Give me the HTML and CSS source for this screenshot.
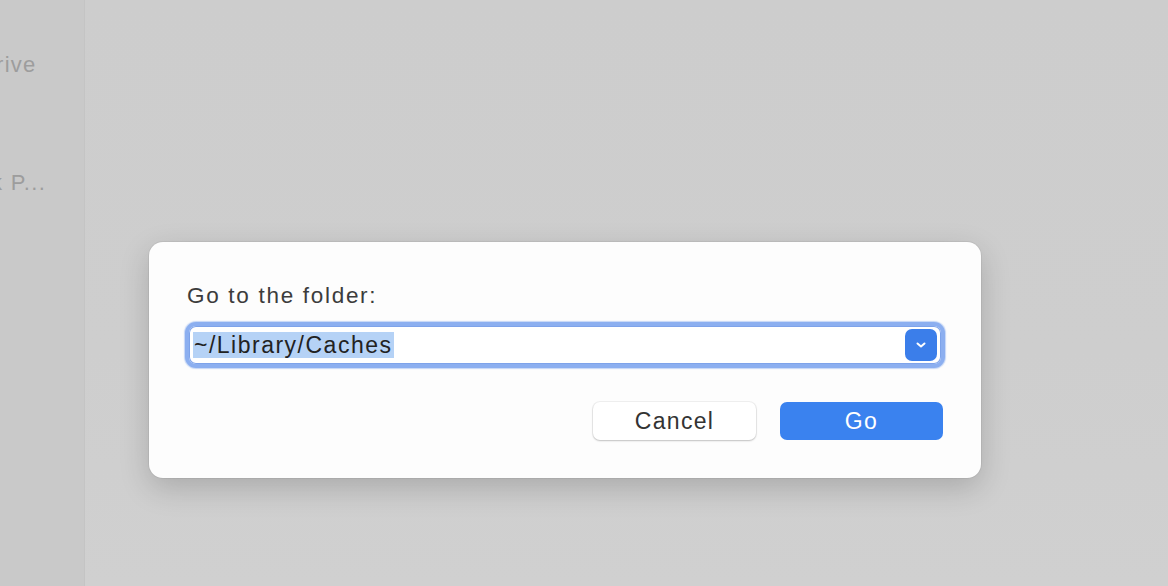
FILE: index.html
```html
<!DOCTYPE html>
<html>
<head>
<meta charset="utf-8">
<link rel="stylesheet" href="styles.css">
</head>
<body>
<div class="app">
  <aside class="sidebar">
    <div class="side-item first">rive</div>
    <div class="side-item second">k P...</div>
  </aside>
  <main class="main">
    <div class="dialog">
      <div class="label">Go to the folder:</div>
      <div class="field">
        <span class="value"><span class="sel">~/Library/Caches</span></span>
        <span class="drop">
          <svg width="14" height="10" viewBox="0 0 14 10"><path d="M3.5 3.5 L7 6.5 L10.5 3.5" fill="none" stroke="#fff" stroke-width="2" stroke-linecap="round" stroke-linejoin="round"/></svg>
        </span>
      </div>
      <div class="buttons">
        <button class="btn cancel">Cancel</button>
        <button class="btn go">Go</button>
      </div>
    </div>
  </main>
</div>
</body>
</html>
```
FILE: styles.css
```css
html, body {
  margin: 0;
  padding: 0;
  width: 1168px;
  height: 586px;
  overflow: hidden;
  font-family: "Helvetica Neue", "Liberation Sans", Arial, sans-serif;
}
.app {
  display: flex;
  width: 1168px;
  height: 586px;
}
.sidebar {
  width: 84px;
  background: #c9c9c9;
  border-right: 1px solid #c4c4c4;
  overflow: hidden;
  flex-shrink: 0;
}
.side-item {
  color: #9d9d9d;
  font-size: 22px;
  letter-spacing: 1.3px;
  white-space: nowrap;
  line-height: 28px;
}
.side-item.first {
  margin-top: 51px;
  margin-left: -4px;
}
.side-item.second {
  margin-top: 90px;
  margin-left: -9px;
}
.main {
  flex: 1;
  background: linear-gradient(180deg, #cdcdcd 0%, #cecece 60%, #d0d0d0 100%);
  padding-top: 242px;
  padding-left: 64px;
}
.dialog {
  width: 832px;
  height: 236px;
  box-sizing: border-box;
  background: #fdfdfd;
  border-radius: 14px;
  box-shadow: 0 10px 30px rgba(0,0,0,0.18), 0 0 0 1px rgba(0,0,0,0.05);
  padding: 40px 36px 0 36px;
}
.label {
  font-size: 22.5px;
  letter-spacing: 1.7px;
  color: #3c3c3c;
  line-height: 28px;
  margin-left: 2px;
}
.field {
  margin-top: 12px;
  height: 46px;
  box-sizing: border-box;
  border: 4px solid #8caff0;
  border-radius: 11px;
  background: #fff;
  display: flex;
  align-items: center;
  padding: 0 4px 0 4px;
  box-shadow: inset 0 0 0 1px #7ea3ea, 0 0 1px 1px rgba(140,175,240,0.5);
}
.value {
  flex: 1;
  font-size: 23px;
  letter-spacing: 1.5px;
  color: #222;
  line-height: 30px;
}
.sel {
  background: #b5d2f6;
  padding: 0 1px;
}
.drop {
  width: 32px;
  height: 32px;
  border-radius: 7px;
  background: #3b7eea;
  display: flex;
  align-items: center;
  justify-content: center;
}
.buttons {
  display: flex;
  justify-content: flex-end;
  gap: 24px;
  margin-top: 34px;
  padding-right: 2px;
}
.btn {
  width: 163px;
  height: 38px;
  border-radius: 7px;
  font-family: "Helvetica Neue", "Liberation Sans", Arial, sans-serif;
  font-size: 23px;
  letter-spacing: 1.3px;
  border: none;
  padding: 0;
}
.cancel {
  background: #fff;
  color: #333;
  box-shadow: 0 1px 2px rgba(0,0,0,0.2), 0 0 0 1px rgba(0,0,0,0.05);
}
.go {
  background: #3a82ef;
  color: #fff;
}
```
